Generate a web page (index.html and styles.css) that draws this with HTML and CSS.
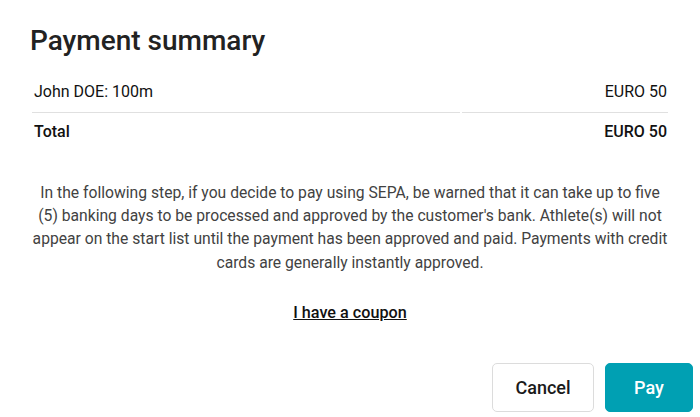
FILE: index.html
```html
<!DOCTYPE html>
<html lang="en">
<head>
<meta charset="utf-8">
<title>Payment summary</title>
<link rel="stylesheet" href="styles.css">
</head>
<body>
<div class="dialog">
  <div class="content">
    <h1 class="title">Payment summary</h1>
    <table class="summary">
      <tbody>
        <tr class="item">
          <td class="label">John DOE: 100m</td>
          <td class="amount">EURO 50</td>
        </tr>
        <tr class="total">
          <td class="label">Total</td>
          <td class="amount">EURO 50</td>
        </tr>
      </tbody>
    </table>
    <p class="notice">In the following step, if you decide to pay using SEPA, be warned that it can take up to five (5) banking days to be processed and approved by the customer's bank. Athlete(s) will not appear on the start list until the payment has been approved and paid. Payments with credit cards are generally instantly approved.</p>
    <div class="coupon-row"><a class="coupon" href="#">I have a coupon</a></div>
  </div>
  <div class="actions">
    <button class="btn btn-cancel" type="button">Cancel</button>
    <button class="btn btn-pay" type="button">Pay</button>
  </div>
</div>
</body>
</html>
```

FILE: styles.css
```css
html, body {
  margin: 0;
  padding: 0;
  background: #fff;
}
body {
  font-family: Roboto, "Liberation Sans", Arial, sans-serif;
  color: #111;
}
.dialog {
  width: 700px;
  height: 417px;
  display: flex;
  flex-direction: column;
}
.content {
  padding: 24px 30px 0 30px;
}
.title {
  margin: 0;
  font-size: 28px;
  font-weight: 500;
  line-height: 33px;
  color: #222;
}
.summary {
  width: 100%;
  margin-top: 13px;
  border-collapse: separate;
  border-spacing: 2px;
  font-size: 16px;
  line-height: 19px;
}
.summary td {
  padding: 10px 1px 11px 2px;
}
.summary .amount {
  width: 203px;
  text-align: right;
}
.item td {
  border-bottom: 1px solid #e0e0e0;
  font-weight: 400;
}
.total td {
  font-weight: 500;
  padding-top: 7px;
  padding-bottom: 10px;
}
.notice {
  margin: 28px 0 0 0;
  padding: 0 2px;
  font-size: 15.68px;
  line-height: 23.2px;
  text-align: center;
  color: #424242;
}
.coupon-row {
  margin-top: 29px;
  text-align: center;
  line-height: 19px;
}
.coupon {
  font-size: 16.2px;
  font-weight: 500;
  color: #111;
  text-decoration: underline;
}
.actions {
  margin-top: auto;
  display: flex;
  justify-content: flex-end;
  gap: 11px;
  padding: 0 7px 5px 0;
}
.btn {
  height: 49px;
  border-radius: 5px;
  font-family: inherit;
  font-size: 18px;
  font-weight: 500;
  cursor: pointer;
}
.btn-cancel {
  width: 102px;
  background: #fff;
  color: #1a1a1a;
  border: 1px solid #dcdcdc;
}
.btn-pay {
  width: 88px;
  background: #00a0b3;
  color: #fff;
  border: 1px solid #00a0b3;
}
```
